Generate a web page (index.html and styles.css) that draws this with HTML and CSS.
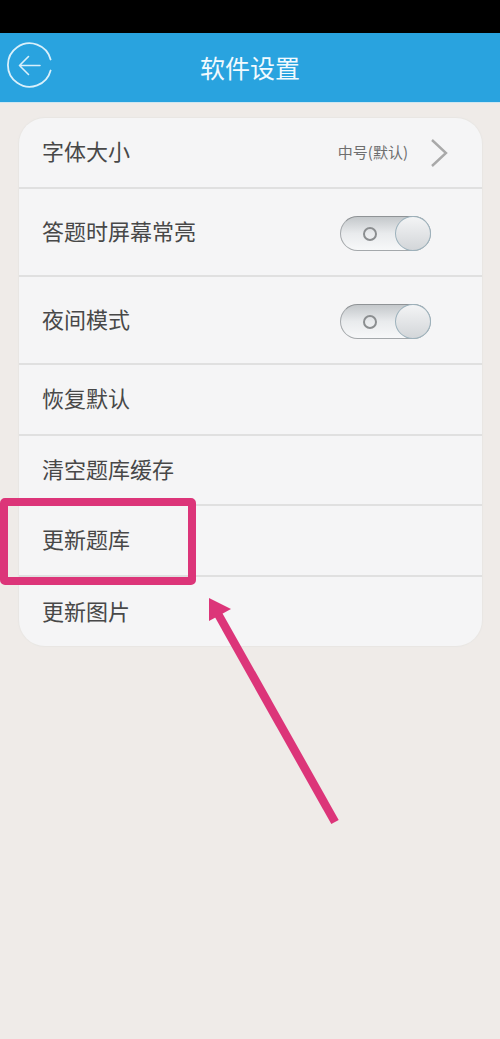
FILE: index.html
```html
<!DOCTYPE html>
<html lang="zh">
<head>
<meta charset="utf-8">
<title>软件设置</title>
<link rel="stylesheet" href="styles.css">
</head>
<body>
<div class="status"></div>
<header class="bar">
  <svg class="back" width="46" height="46" viewBox="0 0 46 46" fill="none" stroke="#d9f0fb">
    <path d="M43.6 17.5A21.7 21.7 0 1 0 43.6 28.5" stroke-width="1.8" stroke-linecap="round"/>
    <path d="M12.5 23.5H33M21.5 14.5L12.5 23.5L21.5 32.5" stroke-width="1.6" stroke-linecap="round" stroke-linejoin="round"/>
  </svg>
  <h1 class="title">软件设置</h1>
</header>
<main class="card">
  <div class="row first">
    <span class="label">字体大小</span>
    <span class="value">中号(默认)</span>
    <svg class="chev" width="18" height="30" viewBox="0 0 18 30" fill="none"><path d="M2 2L16 15L2 28" stroke="#a9a9a9" stroke-width="2.4"/></svg>
  </div>
  <div class="row tall">
    <span class="label">答题时屏幕常亮</span>
    <span class="switch"><span class="dot"></span><span class="knob"></span></span>
  </div>
  <div class="row tall">
    <span class="label">夜间模式</span>
    <span class="switch"><span class="dot"></span><span class="knob"></span></span>
  </div>
  <div class="row"><span class="label">恢复默认</span></div>
  <div class="row narrow"><span class="label">清空题库缓存</span></div>
  <div class="row"><span class="label">更新题库</span></div>
  <div class="row last"><span class="label">更新图片</span></div>
</main>
<div class="mark"></div>
<svg class="arrow" width="500" height="1039" viewBox="0 0 500 1039">
  <path d="M335 822L218 614" stroke="#dc3579" stroke-width="8.5" fill="none"/>
  <path d="M209 598L231 609L209 621Z" fill="#dc3579"/>
</svg>
</body>
</html>
```
FILE: styles.css
```css
html, body {
  margin: 0;
  padding: 0;
}
body {
  position: relative;
  width: 500px;
  height: 1039px;
  overflow: hidden;
  background: #efebe8;
  font-family: "Noto Sans CJK SC", "Noto Sans", sans-serif;
}
.status {
  height: 33px;
  background: #000;
}
.bar {
  position: relative;
  height: 69px;
  background: #29a3df;
  display: flex;
  align-items: center;
  justify-content: center;
  border-bottom: 1px solid #cfe6f0;
}
.back {
  position: absolute;
  left: 7px;
  top: 9px;
}
.title {
  margin: 0;
  font-size: 25px;
  font-weight: 400;
  color: #f2fafe;
  line-height: 1;
}
.card {
  margin: 15px 18px 0 19px;
  background: #f5f5f6;
  border-radius: 26px;
  box-shadow: 0 0 1px 1px #e8e6e3;
  overflow: hidden;
}
.row {
  box-sizing: border-box;
  height: 71px;
  display: flex;
  align-items: center;
  padding: 0 34px 0 23px;
  border-bottom: 2px solid #e0e0e0;
}
.narrow {
  height: 70px;
}
.last {
  height: 69px;
  border-bottom: 0;
}
.tall {
  height: 88px;
}
.label {
  flex: 1;
  font-size: 22px;
  color: #484848;
  line-height: 1;
  padding-bottom: 5px;
}
.first .label {
  padding-bottom: 6px;
}
.tall .label {
  padding-bottom: 4px;
}
.last .label {
  padding-bottom: 3px;
}
.value {
  font-size: 15px;
  color: #6e6e6e;
  margin-right: 22px;
  padding-bottom: 2px;
}
.chev {
  display: block;
}
.switch {
  position: relative;
  top: 1px;
  width: 91px;
  height: 35px;
  margin-right: 17px;
  box-sizing: border-box;
  border: 1px solid #a4a8ab;
  border-top-color: #8f9396;
  border-radius: 18px;
  background: linear-gradient(#c4c8cb, #e9ebed 50%, #f7f8f9);
}
.dot {
  position: absolute;
  left: 22px;
  top: 10px;
  width: 14px;
  height: 14px;
  box-sizing: border-box;
  border: 2.5px solid #8b8e90;
  border-radius: 50%;
}
.knob {
  position: absolute;
  right: -1px;
  top: -1px;
  width: 36px;
  height: 35px;
  box-sizing: border-box;
  border: 1.5px solid #9db2bc;
  border-radius: 50%;
  background: linear-gradient(#f3f4f5, #d3d6d9);
}
.mark {
  position: absolute;
  left: 0;
  top: 498px;
  width: 196px;
  height: 87px;
  box-sizing: border-box;
  border: 8px solid #dc3579;
  border-radius: 5px;
}
.arrow {
  position: absolute;
  left: 0;
  top: 0;
  pointer-events: none;
}
```
